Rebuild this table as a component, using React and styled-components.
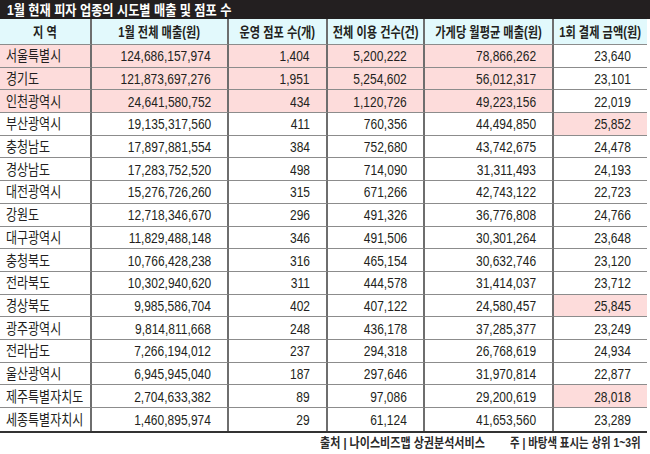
import React from "react";
import styled, { createGlobalStyle } from "styled-components";

const COLS = "92px 137px 99px 97px 129px 93px";
const FONT = `"Liberation Sans", "Noto Sans CJK KR", sans-serif`;

const headers = [
  "지 역",
  "1월 전체 매출(원)",
  "운영 점포 수(개)",
  "전체 이용 건수(건)",
  "가게당 월평균 매출(원)",
  "1회 결제 금액(원)",
];

const rows = [
  ["서울특별시", "124,686,157,974", "1,404", "5,200,222", "78,866,262", "23,640"],
  ["경기도", "121,873,697,276", "1,951", "5,254,602", "56,012,317", "23,101"],
  ["인천광역시", "24,641,580,752", "434", "1,120,726", "49,223,156", "22,019"],
  ["부산광역시", "19,135,317,560", "411", "760,356", "44,494,850", "25,852"],
  ["충청남도", "17,897,881,554", "384", "752,680", "43,742,675", "24,478"],
  ["경상남도", "17,283,752,520", "498", "714,090", "31,311,493", "24,193"],
  ["대전광역시", "15,276,726,260", "315", "671,266", "42,743,122", "22,723"],
  ["강원도", "12,718,346,670", "296", "491,326", "36,776,808", "24,766"],
  ["대구광역시", "11,829,488,148", "346", "491,506", "30,301,264", "23,648"],
  ["충청북도", "10,766,428,238", "316", "465,154", "30,632,746", "23,120"],
  ["전라북도", "10,302,940,620", "311", "444,578", "31,414,037", "23,712"],
  ["경상북도", "9,985,586,704", "402", "407,122", "24,580,457", "25,845"],
  ["광주광역시", "9,814,811,668", "248", "436,178", "37,285,377", "23,249"],
  ["전라남도", "7,266,194,012", "237", "294,318", "26,768,619", "24,934"],
  ["울산광역시", "6,945,945,040", "187", "297,646", "31,970,814", "22,877"],
  ["제주특별자치도", "2,704,633,382", "89", "97,086", "29,200,619", "28,018"],
  ["세종특별자치시", "1,460,895,974", "29", "61,124", "41,653,560", "23,289"],
];

// 바탕색: 상위 1~3위
const topPayment = [3, 11, 15];
const isPink = (r, c) => (c < 5 ? r < 3 : topPayment.includes(r));

const GlobalStyle = createGlobalStyle`
  html, body {
    margin: 0;
    padding: 0;
    background: #fff;
  }
  body {
    font-family: ${FONT};
    color: #231f20;
  }
`;

const Page = styled.div`
  width: 650px;
  height: 454px;
  overflow: hidden;
  background: #fff;
`;

const TitleBar = styled.div`
  height: 19px;
  background: #231f20;
  color: #fff;
  display: flex;
  align-items: center;
  padding-left: 7px;
  font-size: 14px;
  font-weight: bold;
`;

const Table = styled.div`
  width: 647px;
  border-bottom: 2px solid #333;
`;

const Row = styled.div`
  display: grid;
  grid-template-columns: ${COLS};
  height: ${(p) => (p.$head ? "26px" : "22.7px")};
  background: ${(p) => (p.$head ? "#e2f9fc" : "transparent")};
`;

const Cell = styled.div`
  box-sizing: border-box;
  display: flex;
  align-items: center;
  justify-content: ${(p) => p.$align};
  padding: ${(p) => (p.$align === "flex-end" ? "0 16px 0 0" : p.$align === "flex-start" ? "0 0 0 6px" : "0")};
  background: ${(p) => (p.$pink ? "#fddcdb" : "transparent")};
  border-right: ${(p) => (p.$last ? "none" : "2px solid #6e6e6e")};
  border-bottom: ${(p) => (p.$noLine ? "none" : "1px solid #8c8c8c")};
  overflow: visible;
  white-space: nowrap;
`;

const Squeeze = styled.span`
  display: inline-block;
  white-space: nowrap;
  font-size: ${(p) => p.$size || 15}px;
  font-weight: ${(p) => (p.$bold ? "bold" : "normal")};
  transform: scaleX(${(p) => p.$sx || 0.78});
  transform-origin: ${(p) => p.$origin || "right"} center;
  line-height: 1;
`;

const Footer = styled.div`
  display: flex;
  justify-content: flex-end;
  align-items: center;
  height: 20px;
  padding-right: 1px;
  color: #2a2a2a;
  overflow: hidden;
`;

const Note = styled.div`
  flex: 0 0 ${(p) => p.$w}px;
  min-width: 0;
  display: flex;
  justify-content: flex-start;
  overflow: visible;
`;

export default function App() {
  return (
    <Page>
      <GlobalStyle />
      <TitleBar>
        <Squeeze $size={14} $bold $sx={0.87} $origin="left">
          1월 현재 피자 업종의 시도별 매출 및 점포 수
        </Squeeze>
      </TitleBar>
      <Table>
        <Row $head>
          {headers.map((h, i) => (
            <Cell key={h} $align="center" $last={i === 5}>
              <Squeeze $size={14} $bold $sx={0.8} $origin="center">
                {h}
              </Squeeze>
            </Cell>
          ))}
        </Row>
        {rows.map((row, r) => (
          <Row key={row[0]}>
            {row.map((v, c) => (
              <Cell
                key={c}
                $align={c === 0 ? "flex-start" : "flex-end"}
                $pink={isPink(r, c)}
                $last={c === 5}
                $noLine={r === rows.length - 1}
              >
                <Squeeze $sx={0.8} $origin={c === 0 ? "left" : "right"}>
                  {v}
                </Squeeze>
              </Cell>
            ))}
          </Row>
        ))}
      </Table>
      <Footer>
        <Note $w={190}>
          <Squeeze $size={13} $bold $sx={0.85} $origin="left">
            출처 | 나이스비즈맵 상권분석서비스
          </Squeeze>
        </Note>
        <Note $w={139}>
          <Squeeze $size={13} $bold $sx={0.8} $origin="left">
            주 | 바탕색 표시는 상위 1~3위
          </Squeeze>
        </Note>
      </Footer>
    </Page>
  );
}
